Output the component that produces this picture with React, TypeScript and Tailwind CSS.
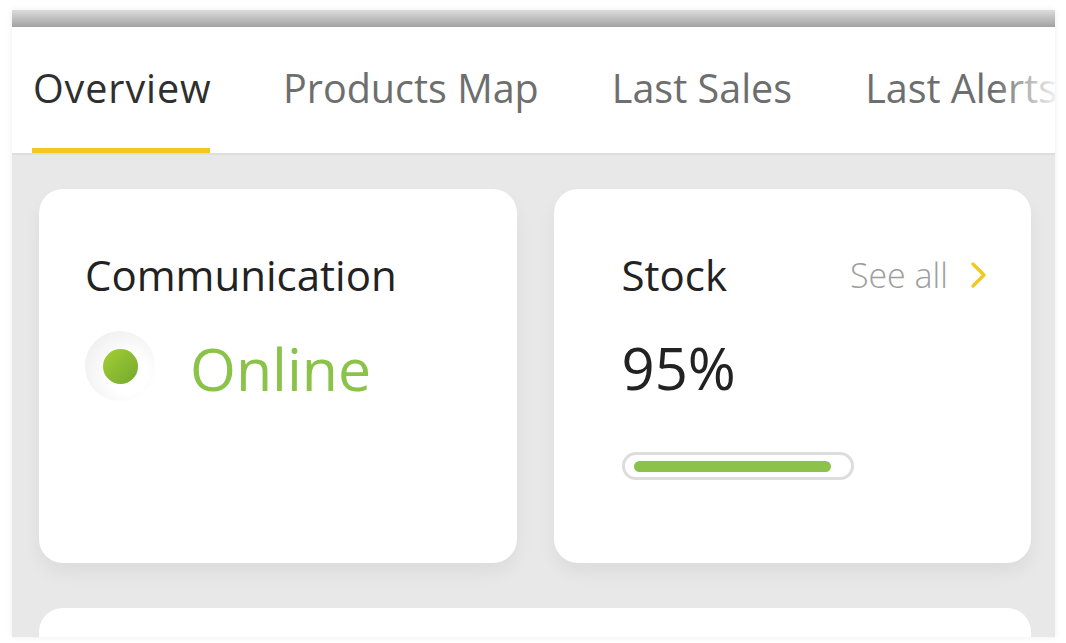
import React from "react";

export default function App() {
  const tabs = ["Overview", "Products Map", "Last Sales", "Last Alerts"];
  return (
    <div
      className="w-[1066px] h-[643px] bg-white overflow-hidden pt-[10px] pl-[12px] pr-[11px]"
      style={{ fontFamily: '"Open Sans", "Noto Sans", sans-serif' }}
    >
      <div className="flex flex-col h-[627px] bg-[#e8e8e8] shadow-[0_0_6px_rgba(0,0,0,0.08)] overflow-hidden">
        <div className="shrink-0 h-[17px] bg-linear-to-b from-[#dcdcdc] to-[#a2a2a2]" />
        <div className="shrink-0 relative bg-white flex pl-[20px] gap-[73px] border-b-[2px] border-[#dedede] overflow-hidden">
          {tabs.map((t, i) => (
            <div key={t} className={`flex flex-col shrink-0 ${i === 0 ? "w-[178px]" : ""}`}>
              <div
                className={`pt-[34px] pb-[33px] text-[39.5px] leading-[54px] whitespace-nowrap ${
                  i === 0 ? "text-[#2f2f2f] tracking-[0.9px] pl-[1px]" : "text-[#6e6e6e]"
                }`}
              >
                {t}
              </div>
              <div className={`h-[5px] ${i === 0 ? "bg-[#f2c81c]" : "bg-transparent"}`} />
            </div>
          ))}
          <div className="absolute right-0 top-0 bottom-0 w-[60px] bg-linear-to-r from-white/0 to-white/90" />
        </div>
        <div className="flex-1 pt-[34px] pl-[27px] pr-[24px]">
          <div className="grid grid-cols-2 gap-[37px]">
            <div className="h-[374px] bg-white rounded-[24px] shadow-[0_10px_18px_rgba(0,0,0,0.05)] pl-[46px] pt-[58px]">
              <div className="text-[42px] leading-[56px] text-[#222] font-medium">Communication</div>
              <div className="flex items-center mt-[26px]">
                <div className="w-[70px] h-[70px] -mt-[4px] rounded-full bg-[radial-gradient(circle_at_62%_62%,#ffffff_30%,#e9e9e9_100%)] flex items-center justify-center">
                  <div className="w-[35px] h-[35px] rounded-full bg-linear-to-br from-[#a5cf33] to-[#72a82e]" />
                </div>
                <div className="ml-[35px] text-[59px] leading-[78px] text-[#8bc34a]">Online</div>
              </div>
            </div>
            <div className="h-[374px] bg-white rounded-[24px] shadow-[0_10px_18px_rgba(0,0,0,0.05)] pl-[68px] pr-[43px] pt-[58px]">
              <div className="flex items-center justify-between">
                <div className="text-[42px] leading-[56px] text-[#222] font-medium">Stock</div>
                <div className="flex items-center">
                  <span className="text-[34px] leading-[56px] text-[#9e9e9e] font-light">See all</span>
                  <svg className="ml-[22px]" width="18" height="26" viewBox="0 0 18 26" fill="none">
                    <path d="M3 2 L14 13 L3 24" stroke="#f2c81c" strokeWidth="3.2" strokeLinecap="round" strokeLinejoin="round" />
                  </svg>
                </div>
              </div>
              <div className="mt-[27px] text-[58px] leading-[76px] text-[#222] font-medium">95%</div>
              <div className="mt-[46px] w-[232px] h-[28px] rounded-full border-[3px] border-[#dddddd] flex items-center px-[9px]">
                <div className="h-[11px] w-[197px] rounded-full bg-[#8bc34a]" />
              </div>
            </div>
          </div>
          <div className="mt-[45px] h-[80px] bg-white rounded-t-[24px]" />
        </div>
      </div>
    </div>
  );
}
